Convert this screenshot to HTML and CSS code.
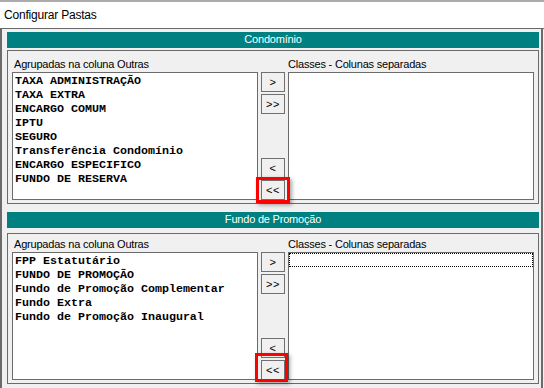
FILE: index.html
```html
<!DOCTYPE html>
<html lang="pt">
<head>
  <meta charset="UTF-8">
  <title>Configurar Pastas</title>
  <link rel="stylesheet" href="styles.css">
</head>
<body>
  <!-- Barra de título -->
  <div class="titlebar">Configurar Pastas</div>

  <div class="frame">
    <!-- Condomínio -->
    <div class="section-bar first">Condomínio</div>
    <div class="group first">
      <div class="label label-left">Agrupadas na coluna Outras</div>
      <div class="label label-right">Classes - Colunas separadas</div>
      <div class="list list-left">TAXA ADMINISTRAÇÃO
TAXA EXTRA
ENCARGO COMUM
IPTU
SEGURO
Transferência Condomínio
ENCARGO ESPECIFICO
FUNDO DE RESERVA</div>
      <div class="buttons">
        <button class="move-btn">&gt;</button>
        <button class="move-btn">&gt;&gt;</button>
        <div class="spacer"></div>
        <button class="move-btn">&lt;</button>
        <button class="move-btn">&lt;&lt;</button>
        <div class="mark mark-first"></div>
      </div>
      <div class="list list-right"></div>
    </div>

    <!-- Fundo de Promoção -->
    <div class="section-bar second">Fundo de Promoção</div>
    <div class="group second">
      <div class="label label-left">Agrupadas na coluna Outras</div>
      <div class="label label-right">Classes - Colunas separadas</div>
      <div class="list list-left">FPP Estatutário
FUNDO DE PROMOÇÃO
Fundo de Promoção Complementar
Fundo Extra
Fundo de Promoção Inaugural</div>
      <div class="buttons">
        <button class="move-btn">&gt;</button>
        <button class="move-btn">&gt;&gt;</button>
        <div class="spacer"></div>
        <button class="move-btn">&lt;</button>
        <button class="move-btn">&lt;&lt;</button>
        <div class="mark mark-second"></div>
      </div>
      <div class="list list-right focused"><div class="focus-row"></div></div>
    </div>
  </div>
</body>
</html>
```

FILE: styles.css
```css
/* Janela */
body {
  margin: 0;
  background: #f0f0f0;
  font-family: "Liberation Sans", Arial, sans-serif;
  font-size: 11px;
  letter-spacing: -0.2px;
  color: #000;
  overflow: hidden;
}

.titlebar {
  height: 26px;
  line-height: 26px;
  padding-left: 4px;
  font-size: 12px;
  background: #fff;
  border-top: 2px solid #ababab;
  border-bottom: 1px solid #6b6b6b;
}

.frame {
  width: 543px;
  height: 359px;
  box-sizing: border-box;
  padding: 3px 2px 0 5px;
  border-left: 2px solid #6b6b6b;
  border-right: 2px solid #6b6b6b;
}

/* Faixa verde com o título da seção */
.section-bar {
  height: 16px;
  line-height: 15px;
  background: #008080;
  color: #fff;
  text-align: center;
}

.section-bar.first { margin-bottom: 2px; }
.section-bar.second { margin: 8px 0 5px; }

/* Caixa do grupo */
.group {
  display: grid;
  grid-template-columns: 246px 24px 246px;
  grid-template-rows: 21px 128px;
  column-gap: 3px;
  padding: 0 4px 3px;
  border: 1px solid #6b6b6b;
}

.group.second { grid-template-rows: 18px 128px; }

.label {
  align-self: end;
  line-height: 13px;
  margin-bottom: 1px;
  white-space: nowrap;
}

.label-left { grid-column: 1; grid-row: 1; padding-left: 2px; }
.label-right { grid-column: 3; grid-row: 1; }

.list {
  grid-row: 2;
  background: #fff;
  border: 1px solid #6b6b6b;
  padding: 1px 0 0 2px;
  font-family: "Liberation Mono", "Courier New", monospace;
  font-weight: bold;
  font-size: 11.67px;
  line-height: 14px;
  letter-spacing: 0;
  white-space: pre;
  overflow: hidden;
}

.list-left { grid-column: 1; }
.list-right { grid-column: 3; }

.list.focused { padding: 0; }

.focus-row {
  height: 14px;
  box-sizing: border-box;
  border: 1px dotted #000;
}

/* Botões de mover */
.buttons {
  grid-column: 2;
  grid-row: 2;
  display: flex;
  flex-direction: column;
  gap: 2px;
  position: relative;
}

.spacer { flex: 1; }

.move-btn {
  height: 20px;
  padding: 0;
  margin: 0;
  border: 1px solid #707070;
  background: #f0f0f0;
  font-family: "Liberation Sans", Arial, sans-serif;
  font-size: 11px;
  letter-spacing: 0.5px;
  color: #000;
}

/* Destaque vermelho sobre o botão << */
.mark {
  position: absolute;
  box-sizing: border-box;
  border: 3px solid #f00;
  box-shadow: 2px 2px 4px rgba(0, 0, 0, 0.35);
}

.mark-first { left: -5px; top: 105px; width: 34px; height: 26px; }
.mark-second { left: -6px; top: 101px; width: 33px; height: 29px; }
```
